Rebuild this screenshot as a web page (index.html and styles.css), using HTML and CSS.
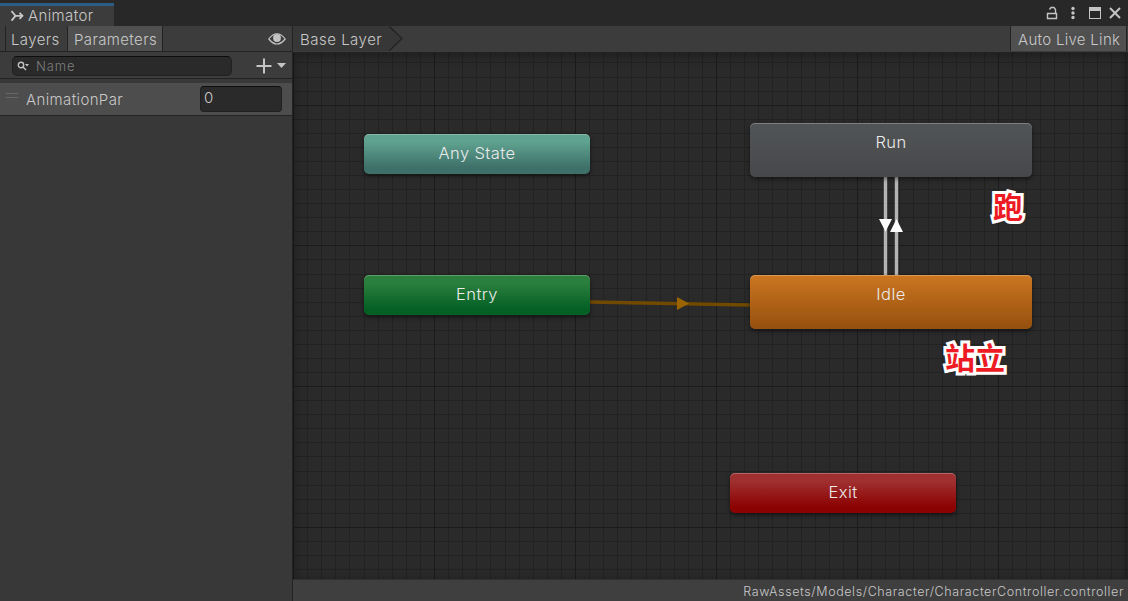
FILE: index.html
```html
<!DOCTYPE html>
<html lang="en">
  <head>
    <meta charset="UTF-8" />
    <meta name="viewport" content="width=device-width, initial-scale=1.0" />
    <title>Animator</title>
    <link rel="stylesheet" href="styles.css">
  </head>
  <body>
    <div class="window">
      <header class="titlebar">
        <div class="tab">
          <svg class="tab-icon" width="14" height="12" viewBox="0 0 14 12">
            <path d="M1.5 1 L5.5 5.8 H12 M1.5 10.6 L5.5 5.8" />
            <path d="M9.5 2.8 L12.5 5.8 L9.5 8.8" />
          </svg>
          <span>Animator</span>
        </div>
        <div class="window-buttons">
          <svg class="lock" width="12" height="14" viewBox="0 0 12 14">
            <path d="M1.5 7.5 H10.5 V12.5 H1.5 Z M9.5 7.5 V3.5 L8 1.5 H5 L3.5 3.5" />
          </svg>
          <svg class="filled menu" width="4" height="14" viewBox="0 0 4 14">
            <circle cx="2" cy="2.5" r="1.7" />
            <circle cx="2" cy="7" r="1.7" />
            <circle cx="2" cy="11.5" r="1.7" />
          </svg>
          <svg class="filled" width="12" height="14" viewBox="0 0 12 14">
            <path fill-rule="evenodd" d="M0 1 H12 V13 H0 Z M1 5 V12 H11 V5 Z" />
          </svg>
          <svg class="close" width="12" height="14" viewBox="0 0 12 14">
            <path d="M1 2 L11 12 M11 2 L1 12" />
          </svg>
        </div>
      </header>

      <div class="content">
        <aside class="sidebar">
          <div class="toolbar">
            <div class="toggle">Layers</div>
            <div class="toggle toggle-on">Parameters</div>
            <svg class="eye" width="18" height="12" viewBox="0 0 18 12">
              <path d="M.8 6 Q9 -4.5 17.2 6 Q9 16 .8 6 Z" />
              <circle cx="9" cy="5" r="3.9" />
            </svg>
          </div>
          <div class="search-row">
            <div class="search">
              <svg width="13" height="10" viewBox="0 0 13 10">
                <circle cx="4" cy="4" r="2.7" />
                <path d="M6 6 L9 9" />
                <path class="caret" d="M8 3 H12 L10 5.4 Z" />
              </svg>
              <span>Name</span>
            </div>
            <svg class="add" width="31" height="16" viewBox="0 0 31 16">
              <path d="M8 .5 V15.5 M.5 8 H15.5" />
              <path class="caret" d="M21 5 H30 L25.5 10 Z" />
            </svg>
          </div>
          <div class="parameter">
            <div class="handle"></div>
            <span class="parameter-name">AnimationPar</span>
            <div class="parameter-value">0</div>
          </div>
        </aside>

        <main class="graph">
          <div class="breadcrumb-bar">
            <div class="breadcrumb">Base Layer</div>
            <svg class="breadcrumb-arrow" width="15" height="25" viewBox="0 0 15 25">
              <path class="arrow-fill" d="M0 0 L13 12.5 L0 25 Z" />
              <path class="arrow-line" d="M0 0 L13 12.5 L0 25" />
            </svg>
            <div class="live-link">Auto Live Link</div>
          </div>
          <div class="canvas">
            <svg class="transitions" width="835" height="527" viewBox="0 0 835 527">
              <path class="line" d="M592.5 124 V222 M603.5 124 V222" />
              <path class="arrow" d="M586 166 H599 L592.5 178.5 Z M597 179 H610 L603.5 166 Z" />
              <path class="entry-line" d="M297 249 L457 252" />
              <path class="entry-arrow" d="M384 244 L396 250.5 L384 257 Z" />
            </svg>
            <div class="state any-state">Any State</div>
            <div class="state run">Run</div>
            <div class="state entry">Entry</div>
            <div class="state idle">Idle</div>
            <div class="state exit">Exit</div>
            <div class="note note-run">跑</div>
            <div class="note note-idle">站立</div>
          </div>
          <footer class="asset-path">RawAssets/Models/Character/CharacterController.controller</footer>
        </main>
      </div>
    </div>
  </body>
</html>
```
FILE: styles.css
```css
* {
  box-sizing: border-box;
}

body {
  margin: 0;
  font-family: Inter, "Noto Sans CJK SC", sans-serif;
  font-size: 15px;
  font-weight: 350;
  letter-spacing: 0.38px;
  color: #c8c8c8;
  background-color: #383838;
}

svg {
  display: block;
  flex: none;
}

.window {
  display: flex;
  flex-direction: column;
  height: 601px;
  overflow: hidden;
}

.titlebar {
  display: flex;
  justify-content: space-between;
  height: 26px;
  padding-top: 3px;
  background-color: #282828;
}

.tab {
  display: flex;
  align-items: center;
  width: 114px;
  padding-left: 10px;
  border-top: 3px solid #2c5d87;
  line-height: 18px;
  background-color: #3c3c3c;
}

.tab-icon {
  margin-right: 4px;
  fill: none;
  stroke: #c8c8c8;
  stroke-width: 1.8;
}

.window-buttons {
  display: flex;
  gap: 8px;
  padding: 3px 7px 0 0;
  fill: none;
  stroke: #c4c4c4;
  stroke-width: 1.4;
}

.window-buttons .lock {
  margin-right: 5px;
}

.window-buttons .menu {
  margin-right: 6px;
}

.window-buttons .filled {
  fill: #c4c4c4;
  stroke: none;
}

.window-buttons .close {
  stroke-width: 2;
}

.content {
  display: flex;
  flex: 1;
  min-height: 0;
}

.sidebar {
  width: 293px;
  border-right: 1px solid #232323;
}

.toolbar {
  display: flex;
  align-items: center;
  height: 26px;
  padding-left: 5px;
  border-bottom: 1px solid #232323;
  background-color: #3c3c3c;
}

.toggle {
  width: 62px;
  height: 25px;
  padding-left: 5px;
  border-left: 1px solid #232323;
  line-height: 27px;
}

.toggle-on {
  width: 96px;
  padding-left: 6px;
  border-right: 1px solid #232323;
  background-color: #505050;
}

.eye {
  margin-right: 6px;
  margin-left: auto;
  fill: none;
  stroke: #c4c4c4;
  stroke-width: 1.2;
}

.eye circle {
  fill: #c4c4c4;
  stroke: none;
}

.search-row {
  display: flex;
  align-items: center;
  height: 27px;
  padding: 1px 5px 0 12px;
  border-bottom: 1px solid #232323;
  background-color: #3c3c3c;
}

.search {
  display: flex;
  align-items: center;
  width: 220px;
  height: 20px;
  padding-left: 4px;
  border: 1px solid #212121;
  border-top-color: #0d0d0d;
  border-radius: 5px;
  font-size: 13px;
  letter-spacing: 0.9px;
  color: #7d7d7d;
  background-color: #2a2a2a;
}

.search svg {
  margin-right: 6px;
  fill: none;
  stroke: #c4c4c4;
  stroke-width: 1.4;
}

.search .caret,
.add .caret {
  fill: #c4c4c4;
  stroke: none;
}

.add {
  margin-left: auto;
  stroke: #c4c4c4;
  stroke-width: 2;
}

.parameter {
  display: flex;
  align-items: center;
  height: 33px;
  margin-top: 4px;
  padding-left: 6px;
  border-bottom: 1px solid #232323;
  background-color: #4d4d4d;
}

.handle {
  width: 12px;
  height: 5px;
  margin: -7px 8px 0 0;
  border: solid #686868;
  border-width: 1px 0;
}

.parameter-value {
  width: 82px;
  height: 26px;
  margin-right: 10px;
  margin-left: auto;
  padding-left: 3px;
  border: 1px solid #212121;
  border-top-color: #0d0d0d;
  border-radius: 4px;
  line-height: 22px;
  background-color: #2a2a2a;
}

.graph {
  display: flex;
  flex: 1;
  flex-direction: column;
  min-width: 0;
}

.breadcrumb-bar {
  display: flex;
  height: 27px;
  padding-right: 1px;
  border-bottom: 1px solid #232323;
  line-height: 27px;
  background-color: #3c3c3c;
}

.breadcrumb {
  width: 96px;
  height: 25px;
  padding-left: 7px;
  letter-spacing: 0.5px;
  white-space: nowrap;
  background-color: #373737;
}

.arrow-fill {
  fill: #373737;
}

.arrow-line {
  fill: none;
  stroke: #242424;
  stroke-width: 1.4;
}

.live-link {
  width: 117px;
  height: 25px;
  margin-left: auto;
  padding-left: 7px;
  border-right: 1px solid #232323;
  border-left: 1px solid #232323;
  letter-spacing: 0.3px;
  white-space: nowrap;
  background-color: #505050;
}

.canvas {
  position: relative;
  flex: 1;
  background-color: #2a2a2a;
  background-image:
    repeating-linear-gradient(to right, #1b1b1b 0 1px, transparent 1px 141px),
    repeating-linear-gradient(to bottom, #1b1b1b 0 1px, transparent 1px 140.7px),
    repeating-linear-gradient(to right, #222 0 1px, transparent 1px 14.1px),
    repeating-linear-gradient(to bottom, #222 0 1px, transparent 1px 14.07px);
  background-position: 0 0, 0 -89px, 0 0, 0 -89px;
  background-size: 100% 700px;
  box-shadow: inset 0 2px 12px rgba(0, 0, 0, 0.35);
}

.transitions {
  position: absolute;
  top: 0;
  left: 0;
}

.line {
  stroke: #b4b4b4;
  stroke-width: 3.4;
}

.arrow {
  fill: #fff;
}

.entry-line {
  stroke: #714a00;
  stroke-width: 3.4;
}

.entry-arrow {
  fill: #9a6500;
}

.state {
  position: absolute;
  width: 226px;
  height: 40px;
  border-radius: 5px;
  font-size: 16.5px;
  line-height: 39px;
  text-align: center;
  letter-spacing: 0.4px;
  color: #ebebeb;
  box-shadow: inset 0 1px rgba(255, 255, 255, 0.25), 0 2px 4px rgba(0, 0, 0, 0.5);
}

.any-state {
  top: 81px;
  left: 71px;
  background-image: linear-gradient(#5fa28f 20%, #3e6f68 85%);
}

.run,
.idle {
  width: 282px;
  height: 54px;
}

.run {
  top: 70px;
  left: 457px;
  background-image: linear-gradient(#515456, #47484b);
}

.entry {
  top: 222px;
  left: 71px;
  background-image: linear-gradient(#2a7f3d 20%, #056025 85%);
}

.idle {
  top: 222px;
  left: 457px;
  background-image: linear-gradient(#cc7620, #95500e);
}

.exit {
  top: 420px;
  left: 437px;
  background-image: linear-gradient(#a03030 20%, #8c0202 85%);
}

/* outlined notes on top of the graph */
.note {
  position: absolute;
  font-family: "Noto Sans CJK SC", sans-serif;
  font-size: 30px;
  font-weight: 700;
  line-height: 36px;
  letter-spacing: 0;
  color: #ed1c24;
  -webkit-text-stroke: 6px #fff;
  paint-order: stroke fill;
  stroke-linejoin: round;
}

.note-run {
  top: 134px;
  left: 700px;
}

.note-idle {
  top: 285px;
  left: 652px;
}

.asset-path {
  height: 22px;
  padding-right: 4px;
  border-top: 1px solid #303030;
  font-size: 12.5px;
  line-height: 23px;
  letter-spacing: 0.6px;
  text-align: right;
  background-color: #3f3f3f;
}
```
